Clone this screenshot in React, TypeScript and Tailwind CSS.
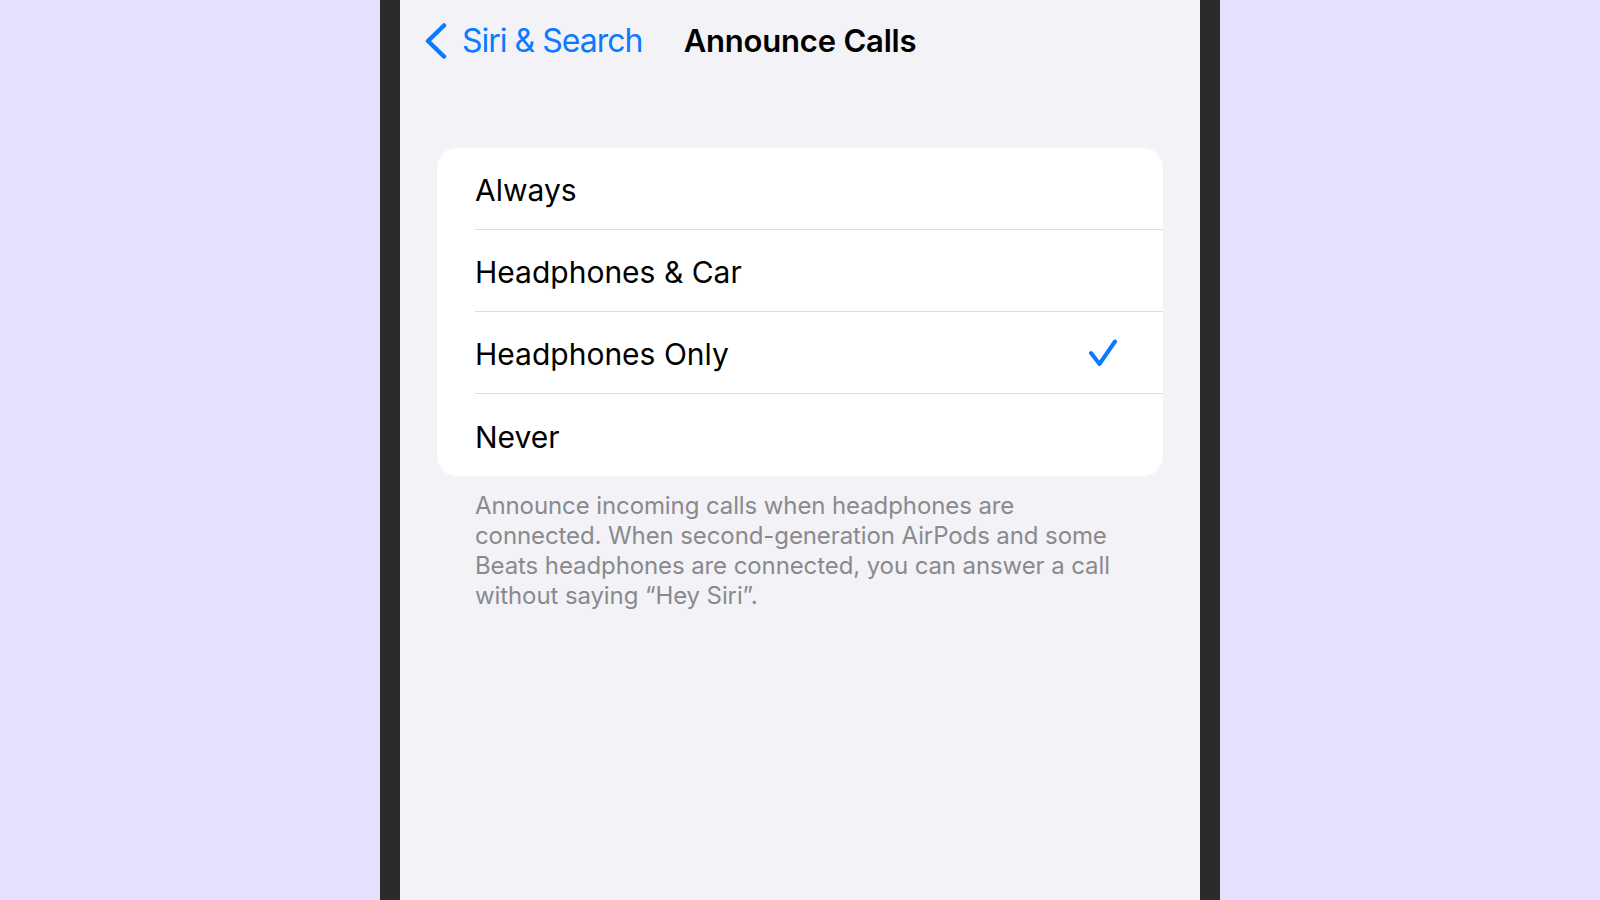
import { useState } from "react";

interface Option {
  id: string;
  label: string;
}

const options: Option[] = [
  { id: "always", label: "Always" },
  { id: "car", label: "Headphones & Car" },
  { id: "headphones", label: "Headphones Only" },
  { id: "never", label: "Never" },
];

function BackChevron() {
  return (
    <svg width="22" height="36" viewBox="0 0 22 36" fill="none" className="shrink-0">
      <polyline
        points="19,2.5 3,18 19,33.5"
        stroke="#0a7aff"
        strokeWidth="4.5"
        strokeLinecap="round"
        strokeLinejoin="round"
      />
    </svg>
  );
}

function Checkmark() {
  return (
    <svg width="30" height="28" viewBox="0 0 30 28" fill="none" className="shrink-0">
      <polyline
        points="3,14 11.5,25 27,2.5"
        stroke="#0a7aff"
        strokeWidth="4"
        strokeLinecap="round"
        strokeLinejoin="round"
      />
    </svg>
  );
}

function PhoneScreen() {
  const [selected, setSelected] = useState("headphones");

  return (
    <div className="w-[800px] h-full bg-[#f2f2f7] flex flex-col font-['Inter',sans-serif]">
      {/* nav bar */}
      <div className="grid grid-cols-[1fr_auto_1fr] items-center h-[82px]">
        <button className="flex items-center gap-[15px] pl-[25px] text-[#0a7aff] text-[32px] tracking-[-1px]">
          <BackChevron />
          <span>Siri &amp; Search</span>
        </button>
        <h1 className="text-[31px] font-semibold text-black tracking-[-0.2px]">Announce Calls</h1>
        <div />
      </div>

      {/* options list */}
      <div className="mx-[37px] mt-[66px] bg-white rounded-[20px] overflow-hidden">
        {options.map((opt, i) => (
          <div key={opt.id} className="pl-[38px]" onClick={() => setSelected(opt.id)}>
            <div
              className={`flex items-center justify-between h-[82px] pr-[45px] ${
                i < options.length - 1 ? "border-b border-[#dedee2]" : ""
              }`}
            >
              <span className="pt-[4px] text-[30px] text-black">{opt.label}</span>
              {selected === opt.id && <Checkmark />}
            </div>
          </div>
        ))}
      </div>

      {/* footer note */}
      <p className="px-[75px] pt-[15px] text-[24px] leading-[30px] text-[#8a8a8e] tracking-[-0.1px]">
        Announce incoming calls when headphones are
        <br />
        connected. When second-generation AirPods and some
        <br />
        Beats headphones are connected, you can answer a call
        <br />
        without saying “Hey Siri”.
      </p>
    </div>
  );
}

export default function App() {
  return (
    <div className="w-[1600px] h-[900px] flex bg-[#e4e0fe] overflow-hidden">
      <div className="flex-1" />
      <div className="w-[20px] bg-[#2b2b2d]" />
      <PhoneScreen />
      <div className="w-[20px] bg-[#2b2b2d]" />
      <div className="flex-1" />
    </div>
  );
}
